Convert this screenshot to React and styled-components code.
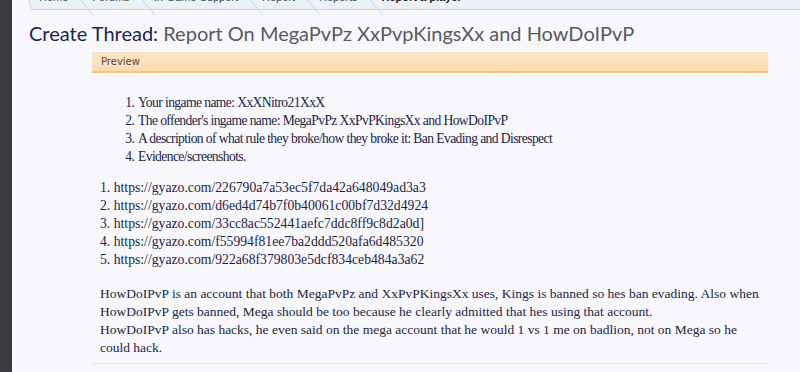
import React from "react";
import styled, { createGlobalStyle } from "styled-components";

const Global = createGlobalStyle`
  html, body { margin: 0; padding: 0; background: #f8f8fc; }
  body { overflow: hidden; }
`;

const Shell = styled.div`
  display: flex;
  width: 800px;
  height: 372px;
  overflow: hidden;
  background: #f8f8fc;
`;

const SideStrip = styled.div`
  width: 12px;
  flex: none;
  background: #3b3a40;
`;

const Main = styled.div`
  flex: 1;
  min-width: 0;
  padding-left: 17px;
`;

const Crumbs = styled.nav`
  display: flex;
  align-items: center;
  height: 24px;
  margin-top: -16px;
  background: linear-gradient(#f2f6fa, #e9f0f6);
  border: 1px solid #c9d8e5;
  border-right: none;
  border-radius: 0 0 0 6px;
  font-family: "Liberation Sans", sans-serif;
  font-size: 11px;
  color: #3c4656;
  padding-left: 9px;
`;

const Crumb = styled.span`
  position: relative;
  padding: 0 13px 0 0;
  margin-right: 11px;
  white-space: nowrap;
  font-weight: ${(p) => (p.$current ? "bold" : "normal")};
  color: ${(p) => (p.$current ? "#1a1a1a" : "#3c4656")};
  &::after {
    content: "";
    display: ${(p) => (p.$current ? "none" : "block")};
    position: absolute;
    right: 0;
    top: -6px;
    height: 30px;
    border-right: 1px solid #c3d3e2;
    transform: skewX(40deg);
  }
`;

const Title = styled.h1`
  margin: 10px 0 0 0;
  font-family: Lato, "DejaVu Sans", sans-serif;
  font-weight: normal;
  font-size: 20px;
  line-height: 26px;
  color: #585a5e;
  white-space: nowrap;
`;

const TitleLead = styled.span`
  color: #1b2550;
`;

const Content = styled.section`
  margin: 6px 0 0 63px;
  width: 676px;
  border-bottom: 1px solid #dde7f1;
  padding-bottom: 6px;
`;

const PreviewBar = styled.div`
  height: 18px;
  background: linear-gradient(#fde7c8, #fcdcb2);
  border-bottom: 2px solid #f8c67a;
  border-top: 1px solid #fbe3c2;
  font-family: "DejaVu Sans", sans-serif;
  font-size: 10px;
  line-height: 18px;
  color: #5e4630;
  padding-left: 9px;
`;

const Body = styled.div`
  font-family: "Liberation Serif", serif;
  font-size: 13.5px;
  line-height: 18px;
  color: #1c2444;
  padding: 21px 9px 0 8px;
`;

const Steps = styled.ol`
  margin: 0 0 13px 0;
  padding-left: 37px;
  font-size: 13.6px;
  letter-spacing: -0.6px;
  & li { padding-left: 1px; }
`;

const Links = styled.div`
  margin-bottom: 16px;
  font-size: 13.7px;
`;

const Para = styled.p`
  margin: 0;
`;

export default function App() {
  return (
    <>
      <Global />
      <Shell>
        <SideStrip />
        <Main>
          <Crumbs>
            <Crumb>Home</Crumb>
            <Crumb>Forums</Crumb>
            <Crumb>In-Game Support</Crumb>
            <Crumb>Report</Crumb>
            <Crumb>Reports</Crumb>
            <Crumb $current>Report a player</Crumb>
          </Crumbs>
          <Title>
            <TitleLead>Create Thread:</TitleLead> Report On MegaPvPz XxPvpKingsXx and HowDoIPvP
          </Title>
          <Content>
            <PreviewBar>Preview</PreviewBar>
            <Body>
              <Steps>
                <li>Your ingame name: XxXNitro21XxX</li>
                <li>The offender's ingame name: MegaPvPz XxPvPKingsXx and HowDoIPvP</li>
                <li>A description of what rule they broke/how they broke it: Ban Evading and Disrespect</li>
                <li>Evidence/screenshots.</li>
              </Steps>
              <Links>
                1. https://gyazo.com/226790a7a53ec5f7da42a648049ad3a3<br />
                2. https://gyazo.com/d6ed4d74b7f0b40061c00bf7d32d4924<br />
                3. https://gyazo.com/33cc8ac552441aefc7ddc8ff9c8d2a0d]<br />
                4. https://gyazo.com/f55994f81ee7ba2ddd520afa6d485320<br />
                5. https://gyazo.com/922a68f379803e5dcf834ceb484a3a62
              </Links>
              <Para>
                HowDoIPvP is an account that both MegaPvPz and XxPvPKingsXx uses, Kings is banned so hes ban evading. Also when<br />
                HowDoIPvP gets banned, Mega should be too because he clearly admitted that hes using that account.<br />
                HowDoIPvP also has hacks, he even said on the mega account that he would 1 vs 1 me on badlion, not on Mega so he<br />
                could hack.
              </Para>
            </Body>
          </Content>
        </Main>
      </Shell>
    </>
  );
}
